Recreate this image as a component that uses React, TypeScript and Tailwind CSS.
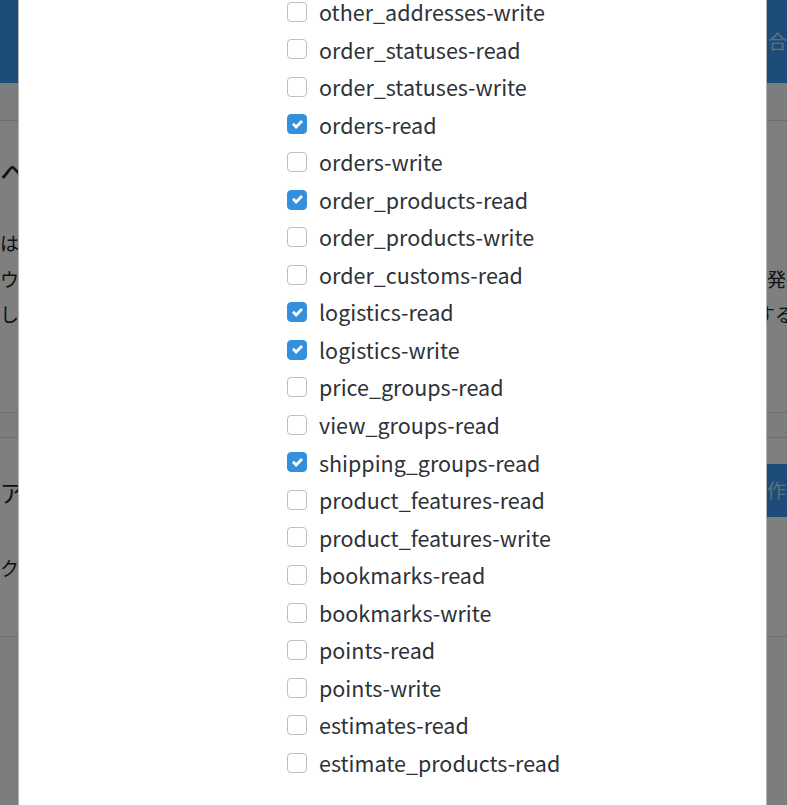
import React from 'react';

const scopes: { name: string; checked: boolean }[] = [
  { name: 'other_addresses-write', checked: false },
  { name: 'order_statuses-read', checked: false },
  { name: 'order_statuses-write', checked: false },
  { name: 'orders-read', checked: true },
  { name: 'orders-write', checked: false },
  { name: 'order_products-read', checked: true },
  { name: 'order_products-write', checked: false },
  { name: 'order_customs-read', checked: false },
  { name: 'logistics-read', checked: true },
  { name: 'logistics-write', checked: true },
  { name: 'price_groups-read', checked: false },
  { name: 'view_groups-read', checked: false },
  { name: 'shipping_groups-read', checked: true },
  { name: 'product_features-read', checked: false },
  { name: 'product_features-write', checked: false },
  { name: 'bookmarks-read', checked: false },
  { name: 'bookmarks-write', checked: false },
  { name: 'points-read', checked: false },
  { name: 'points-write', checked: false },
  { name: 'estimates-read', checked: false },
  { name: 'estimate_products-read', checked: false },
];

function Checkbox({ checked }: { checked: boolean }) {
  if (checked) {
    return (
      <span className="w-[20px] h-[20px] rounded-[4px] bg-[#3490dc] border border-[#3490dc] flex items-center justify-center shrink-0">
        <svg viewBox="0 0 8 8" className="w-[11px] h-[11px]">
          <path fill="#fff" d="M6.564.75l-3.59 3.612-1.538-1.55L0 4.26l2.974 2.99L8 2.193z" />
        </svg>
      </span>
    );
  }
  return <span className="w-[20px] h-[20px] rounded-[4px] bg-white border border-[#b8c0c8] shrink-0" />;
}

export default function App() {
  return (
    <div
      className="relative h-[805px] overflow-hidden bg-[#f8fafc] text-[#212529]"
      style={{ fontFamily: '"Noto Sans CJK JP", "Noto Sans", sans-serif' }}
    >
      {/* Page behind the modal */}
      <header className="h-[83px] bg-[#3a99f0] flex items-center justify-end">
        <span className="text-white/70 text-[19px] whitespace-nowrap -mr-[38px]">お問い合わせ</span>
      </header>
      <div className="pt-[37px]">
        <section className="bg-white border-y border-[#dcdcdc] h-[293px] pt-[28px]">
          <h2 className="text-[30px] leading-[44px] whitespace-nowrap">ベーシック認証の設定について</h2>
          <div className="mt-[32px] text-[19px] leading-[35.5px] whitespace-nowrap w-[805px]">
            <p className="flex justify-between">
              <span>
                は<span className="text-[#f6993f]">■</span>ウェブアプリケーションの開発を行うことができます。
              </span>
              <span />
            </p>
            <p className="flex justify-between">
              <span>ウーバー・スマートアプリケーションが自動的に管理します。</span>
              <span>発行</span>
            </p>
            <p className="flex justify-between">
              <span>しかしこの設定は開発者が変更することができます。</span>
              <span className="pr-[11px]">する</span>
            </p>
          </div>
        </section>
        <section className="mt-[24px] bg-white border-y border-[#dcdcdc] h-[200px] pt-[26px] flex justify-between">
          <div className="whitespace-nowrap">
            <h3 className="text-[24px] leading-[56px]">アクセストークン</h3>
            <p className="mt-[34px] text-[19px]">クライアント一覧</p>
          </div>
          <button className="h-[53px] bg-[#3a99f0] text-white/70 text-[19px] px-[12px] whitespace-nowrap -mr-[30px]">
            作成
          </button>
        </section>
      </div>

      {/* Backdrop */}
      <div className="absolute inset-0 bg-black/50" />

      {/* Modal */}
      <div className="absolute inset-0 overflow-hidden">
        <div className="w-[749px] ml-[18px] -mt-[7px] h-[900px] bg-white border-x border-black/30">
          <ul className="pl-[268px]">
            {scopes.map((s) => (
              <li key={s.name} className="h-[37.55px] flex items-center gap-[12px]">
                <Checkbox checked={s.checked} />
                <span className="text-[21.5px] text-[#2d3238] leading-none">{s.name}</span>
              </li>
            ))}
          </ul>
        </div>
      </div>
    </div>
  );
}
